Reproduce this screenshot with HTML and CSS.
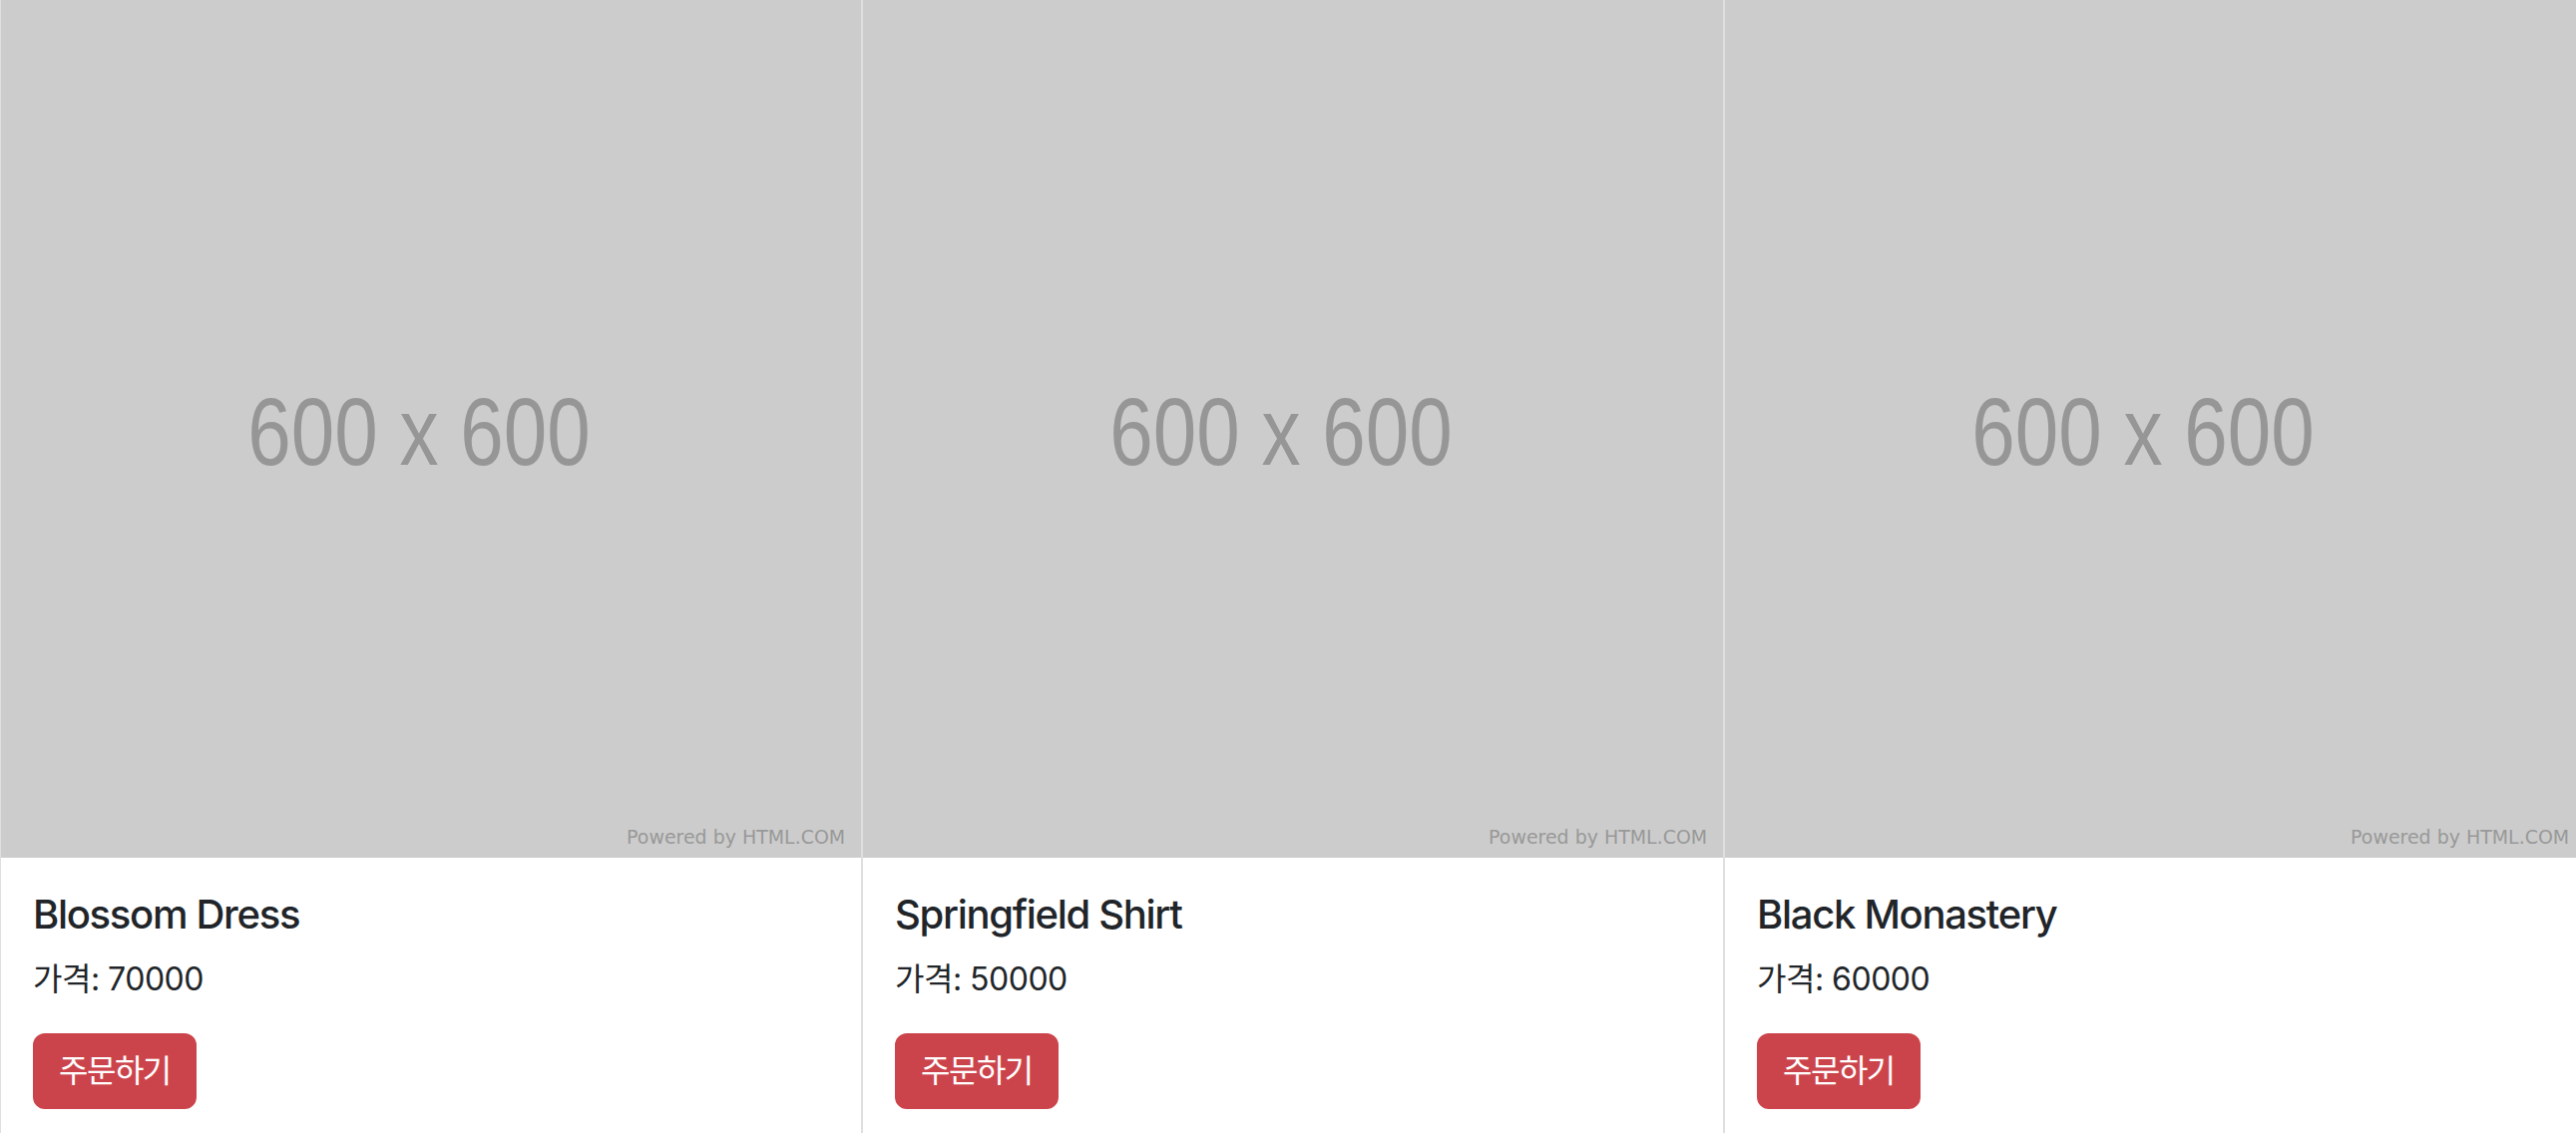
FILE: index.html
```html
<!DOCTYPE html>
<html lang="ko">
<head>
    <meta charset="UTF-8">
    <meta name="viewport" content="width=device-width, initial-scale=1.0">
    <title>Products</title>
    <link rel="stylesheet" href="styles.css">
</head>
<body>

    <div class="card-group">
        <div class="card">
            <svg class="card-img" viewBox="0 0 600 600" xmlns="http://www.w3.org/2000/svg">
                <rect width="600" height="600" fill="#cccccc"/>
                <text class="ph-size" x="291.6" y="325.8" text-anchor="middle" textLength="239" lengthAdjust="spacingAndGlyphs">600 x 600</text>
                <text class="ph-credit" x="589" y="590" text-anchor="end">Powered by HTML.COM</text>
            </svg>
            <div class="card-body">
                <h5 class="card-title">Blossom Dress</h5>
                <p class="card-text">가격: 70000</p>
                <button class="order-button">주문하기</button>
            </div>
        </div>
        <div class="card">
            <svg class="card-img" viewBox="0 0 600 600" xmlns="http://www.w3.org/2000/svg">
                <rect width="600" height="600" fill="#cccccc"/>
                <text class="ph-size" x="291.6" y="325.8" text-anchor="middle" textLength="239" lengthAdjust="spacingAndGlyphs">600 x 600</text>
                <text class="ph-credit" x="589" y="590" text-anchor="end">Powered by HTML.COM</text>
            </svg>
            <div class="card-body">
                <h5 class="card-title">Springfield Shirt</h5>
                <p class="card-text">가격: 50000</p>
                <button class="order-button">주문하기</button>
            </div>
        </div>
        <div class="card">
            <svg class="card-img" viewBox="0 0 600 600" xmlns="http://www.w3.org/2000/svg">
                <rect width="600" height="600" fill="#cccccc"/>
                <text class="ph-size" x="291.6" y="325.8" text-anchor="middle" textLength="239" lengthAdjust="spacingAndGlyphs">600 x 600</text>
                <text class="ph-credit" x="589" y="590" text-anchor="end">Powered by HTML.COM</text>
            </svg>
            <div class="card-body">
                <h5 class="card-title">Black Monastery</h5>
                <p class="card-text">가격: 60000</p>
                <button class="order-button">주문하기</button>
            </div>
        </div>
    </div>

</body>
</html>
```

FILE: styles.css
```css
html,
body {
    overflow: hidden;
}

body {
    font-family: Inter, "Noto Sans CJK KR", sans-serif;
    margin: 0;
    padding: 0;
    background-color: #fff;
    color: #212529;
}

.card-group {
    display: flex;
    margin: -4px 0 0 -1px;
}

.card {
    flex: 0 0 auto;
    display: flex;
    flex-direction: column;
    background-color: #fff;
    border: 2px solid #dfdfdf;
}

.card + .card {
    border-left: 0;
}

.card-img {
    display: block;
    width: 862px;
    height: 862px;
}

.ph-size {
    font-family: "Liberation Sans", Arial, sans-serif;
    font-size: 67px;
    fill: #969696;
}

.ph-credit {
    font-family: "DejaVu Sans", sans-serif;
    font-size: 13.2px;
    fill: #999;
}

.card-body {
    padding: 32px;
}

.card-title {
    margin: 0 0 16px;
    padding-top: 1px;
    font-size: 40px;
    line-height: 48px;
    font-weight: 500;
    letter-spacing: -1.3px;
}

.card-text {
    margin: 0 0 31px;
    padding-top: 1px;
    font-size: 32px;
    line-height: 47px;
    letter-spacing: -0.5px;
}

.order-button {
    padding: 12px 24px;
    font-family: Inter, "Noto Sans CJK KR", sans-serif;
    font-size: 32px;
    line-height: 48px;
    color: #fff;
    background-color: #cc444b;
    border: 2px solid #cc444b;
    border-radius: 12px;
    letter-spacing: -1.5px;
    cursor: pointer;
}
```
